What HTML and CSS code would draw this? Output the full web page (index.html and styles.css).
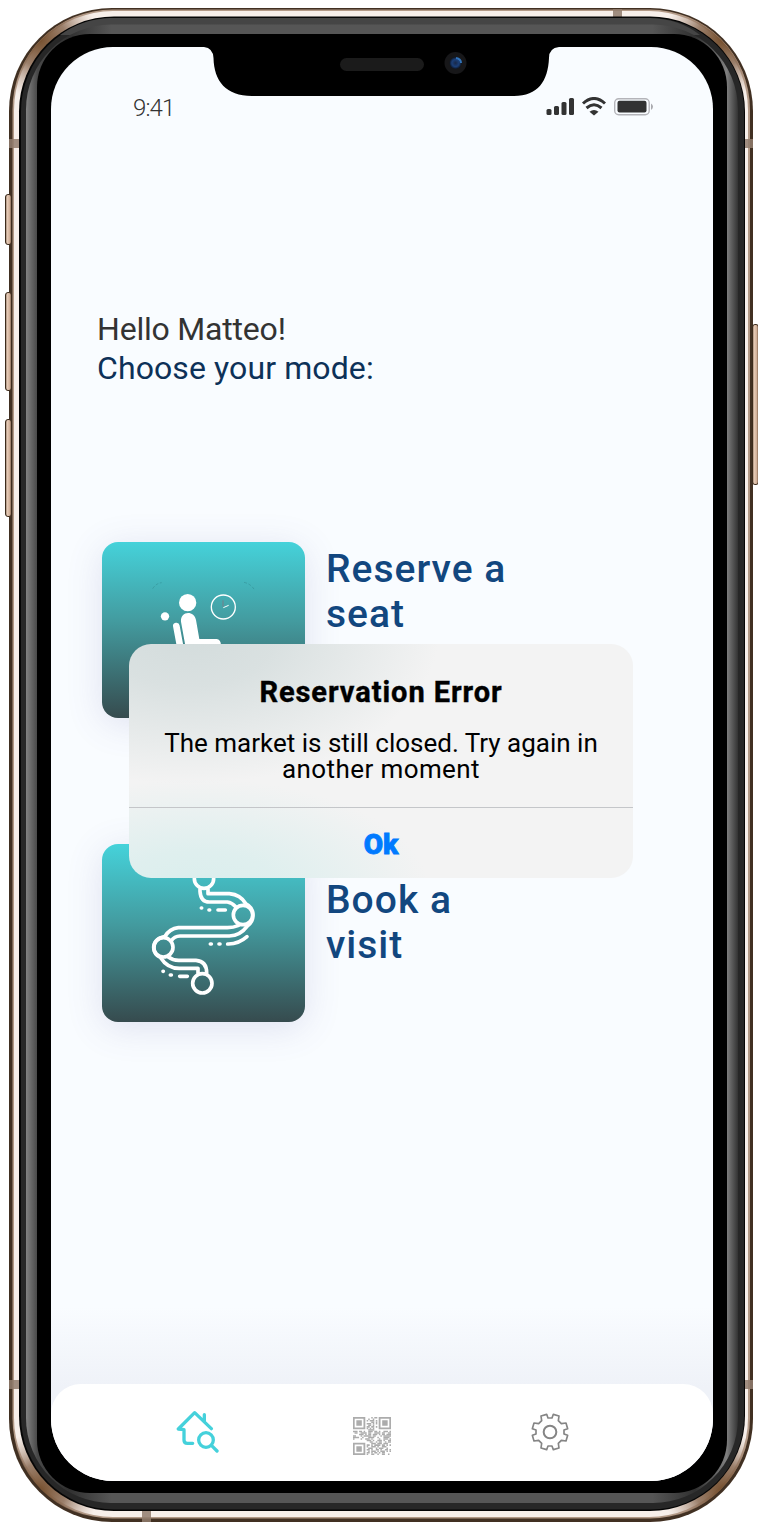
FILE: index.html
```html
<!DOCTYPE html>
<html lang="en">
<head>
<meta charset="utf-8">
<title>Choose your mode</title>
<link rel="stylesheet" href="styles.css">
</head>
<body>
<div class="phone">
  <svg class="frame" viewBox="0 0 758 1530" aria-hidden="true">
    <defs>
      <linearGradient id="key" x1="0" x2="1" y1="0" y2="0"><stop offset="0" stop-color="#86705d"/><stop offset=".3" stop-color="#e6cbb7"/><stop offset=".75" stop-color="#cdab93"/><stop offset="1" stop-color="#4a3524"/></linearGradient>
      <linearGradient id="steel" gradientUnits="userSpaceOnUse" x1="26" x2="738" y1="0" y2="0"><stop offset="0" stop-color="#828282"/><stop offset=".016" stop-color="#484848"/><stop offset=".06" stop-color="#303030"/><stop offset=".12" stop-color="#565656"/><stop offset=".88" stop-color="#565656"/><stop offset=".94" stop-color="#303030"/><stop offset=".984" stop-color="#808080"/><stop offset="1" stop-color="#333"/></linearGradient>
      <radialGradient id="lens"><stop offset="0" stop-color="#182848"/><stop offset=".6" stop-color="#1b3f78"/><stop offset="1" stop-color="#0d1626"/></radialGradient>
      <radialGradient id="bronze"><stop offset="0" stop-color="#76502f"/><stop offset=".45" stop-color="#8b6c55" stop-opacity=".85"/><stop offset="1" stop-color="#b79b88" stop-opacity="0"/></radialGradient>
      <clipPath id="body"><rect x="12" y="10" width="738" height="1509" rx="100"/></clipPath>
    </defs>
    <rect x="9" y="8" width="744" height="1514" rx="103" fill="#413022"/>
    <g stroke="#3c2b1c" stroke-width="1" fill="url(#key)">
      <rect x="5.500" y="194.500" width="6" height="50" rx="2.500"/>
      <rect x="5.500" y="292.500" width="6" height="98" rx="2.500"/>
      <rect x="5.500" y="419.500" width="6" height="97" rx="2.500"/>
      <rect x="752.500" y="324.500" width="6" height="160" rx="2.500"/>
    </g>
    <rect x="12.500" y="9.500" width="737.500" height="1509" rx="100" fill="#b39a87"/>
    <rect x="14" y="11" width="734" height="1506" rx="99" fill="#f7efea"/>
    <g clip-path="url(#body)" fill="url(#bronze)">
      <circle cx="40" cy="40" r="58"/><circle cx="722" cy="40" r="58"/><circle cx="40" cy="1490" r="58"/><circle cx="722" cy="1490" r="58"/>
    </g>
    <g fill="#927d6e" opacity=".85">
      <rect x="9" y="139" width="12" height="9"/><rect x="744" y="139" width="9" height="9"/>
      <rect x="9" y="1380" width="12" height="9"/><rect x="744" y="1380" width="9" height="9"/>
      <rect x="613" y="9" width="9" height="9"/><rect x="142" y="1510" width="9" height="12"/>
    </g>
    <rect x="19" y="16.500" width="726" height="1494.500" rx="95" fill="#050505"/>
    <rect x="21" y="18" width="723" height="1491.500" rx="93" fill="#272727"/>
    <path d="M110 18H650Q680 19 700 35L60 35Q82 19 110 18Z" fill="#454545"/>
    <rect x="26" y="24.500" width="712" height="1478.500" rx="85" fill="url(#steel)"/>
    <rect x="37" y="34" width="690" height="1459" rx="53" fill="#000"/>
  </svg>

  <main class="screen">
    <svg class="notch" viewBox="0 0 356 49" aria-hidden="true">
      <path d="M0 0Q9 1 9.500 11C10 34 22 49 48 49H310C334 49 344 34 345 11Q345 1 355 0Z"/>
      <rect x="136" y="11" width="84" height="13" rx="6.500" fill="#1b1b1b"/>
      <circle cx="251.500" cy="16" r="11" fill="#171719"/><circle cx="251.500" cy="16" r="6" fill="url(#lens)"/><path d="M252 11q5 1 5 5" fill="none" stroke="#3273b8" stroke-width="2"/>
    </svg>

    <header class="status">
      <span class="clock">9:41</span>
      <svg class="signals" viewBox="0 0 108 20" aria-hidden="true">
        <g fill="#333"><rect x=".5" y="12" width="5" height="6" rx="1.500"/><rect x="8" y="9" width="5" height="9" rx="1.500"/><rect x="15.500" y="5" width="5" height="13" rx="1.500"/><rect x="23" y="1" width="5" height="17" rx="1.500"/><path d="M43.500 14.800Q48 11 52.500 14.800L48 18.500Z"/></g>
        <g fill="none" stroke="#333" stroke-width="3"><path d="M37 6.500Q48-3.500 59 6.500M40.500 11Q48 4.500 55.500 11"/></g>
        <rect x="68.700" y="1.700" width="34.500" height="16" rx="4" fill="none" stroke="#b4b4b9" stroke-width="1.400"/>
        <rect x="71.500" y="3.800" width="29" height="11.700" rx="2" fill="#333"/><path d="M105 6.500q4 3 0 6.500Z" fill="#aaaaaf"/>
      </svg>
    </header>

    <section class="greeting">
      <p class="hello">Hello Matteo!</p>
      <h1 class="prompt">Choose your mode:</h1>
    </section>

    <section class="modes">
      <article class="mode">
        <svg class="tile" viewBox="36 36 609 528" preserveAspectRatio="none" role="img" aria-label="Seat">
          <g fill="#fff"><circle cx="293" cy="218" r="26"/><circle cx="225" cy="259" r="12.500"/><path d="M273 275C270 242 313 240 318 270L328 327H380Q392 329 393 345V380H292Z"/></g>
          <path d="M259 288L278 390" stroke="#fff" stroke-width="20" stroke-linecap="round"/>
          <circle cx="400" cy="231" r="36" fill="none" stroke="#fff" stroke-width="4"/>
          <path d="M400 233L416 226" stroke="#fff" stroke-width="3"/><path d="M399 230V211" stroke="#777f88" stroke-width="3"/>
          <path d="M188 176Q198 160 215 158M462 157Q484 162 494 181" fill="none" stroke="#31898f" stroke-width="1.500" stroke-dasharray="9 5"/>
        </svg>
        <h2 class="label">Reserve a<br>seat</h2>
      </article>
      <article class="mode tall">
        <svg class="tile" viewBox="36 42 609 534" preserveAspectRatio="none" role="img" aria-label="Route">
          <g fill="none" stroke="#fff" stroke-width="11" stroke-linecap="round" stroke-linejoin="round">
            <circle cx="342" cy="146" r="29"/><circle cx="459" cy="255" r="29"/><circle cx="220" cy="352" r="29"/><circle cx="337" cy="460" r="29"/>
            <path d="M354 178V191H418Q452 194 468 222Q489 232 489 255Q489 276 473 287Q450 318 418 318H270Q253 319 244 332"/>
            <path d="M330 178V184Q332 216 358 216H412Q426 218 437 230"/>
            <path d="M446 286Q430 293 412 293H265Q239 296 224 320Q192 326 192 354Q192 374 212 383Q232 415 268 415H324V428"/>
            <path d="M235 381Q248 391 266 391H318Q350 393 350 429"/>
            <path d="M334 234H335M357 240H359M384 240H406M361 342H364M387 342H390M413 342Q445 343 471 320M219 424H220M241 435H244M269 439H292"/>
          </g>
        </svg>
        <h2 class="label">Book a<br>visit</h2>
      </article>
    </section>

    <nav class="tabs">
      <svg class="tab home" viewBox="48 60 129 129" aria-label="Home search"><g fill="none" stroke="#45d1db" stroke-width="10" stroke-linecap="round" stroke-linejoin="round"><path d="M154 116L104 68L55 117L72 119V150Q72 160 82 160H98M133 74V94"/><circle cx="138" cy="150" r="22"/><path d="M155 167L171 183"/></g></svg>
      <svg class="tab code" viewBox="0 0 25 25" aria-label="QR code"><g fill="none" stroke="#acacac">
        <path d="M.5.5H7.500V7.500H.5ZM17.500.5H24.500V7.500H17.500ZM.5 17.500H7.500V24.500H.5Z" stroke-width="1.200"/><path d="M4 2.200V5.800M21 2.200V5.800M4 19.200V22.800" stroke-width="3.600"/>
        <path d="M12 .5H16" stroke-dasharray="1 1 2"/><path d="M10 1.500H16" stroke-dasharray="1 2"/><path d="M9 2.500H16" stroke-dasharray="1 1 3 1"/><path d="M12 3.500H16" stroke-dasharray="2 1"/><path d="M9 4.500H16" stroke-dasharray="3 1 1 1"/><path d="M10 5.500H14M9 6.500H16" stroke-dasharray="2 1"/><path d="M9 7.500H15" stroke-dasharray="1 1"/><path d="M10 8.500H14"/>
        <path d="M0 9.500H25" stroke-dasharray="3 1 2 1 1 2"/><path d="M1 10.500H25" stroke-dasharray="2 2 4 1"/><path d="M4 11.500H25" stroke-dasharray="3 1 1 1 2 1"/><path d="M0 12.500H25" stroke-dasharray="2 3 1 1 5 1"/><path d="M0 13.500H25" stroke-dasharray="4 2 1 3"/><path d="M0 14.500H25" stroke-dasharray="1 4 1 2 3 1"/><path d="M9 15.500H25" stroke-dasharray="3 1 1 2"/>
        <path d="M11 16.500H25" stroke-dasharray="2 2 1 1"/><path d="M12 17.500H23" stroke-dasharray="3 1"/><path d="M9 18.500H25" stroke-dasharray="2 1 1 1 4 1"/><path d="M9 19.500H23" stroke-dasharray="1 2 3 1"/><path d="M10 20.500H24" stroke-dasharray="3 2 1 1"/><path d="M9 21.500H25" stroke-dasharray="2 1 1 2"/><path d="M10 22.500H25" stroke-dasharray="1 1 3 1"/><path d="M9 23.500H22" stroke-dasharray="2 1 1 1"/><path d="M9 24.500H25" stroke-dasharray="1 2 2 2"/>
      </g></svg>
      <svg class="tab gear" viewBox="-57 -57 114 114" aria-label="Settings"><g fill="none" stroke="#858585" stroke-width="5" stroke-linejoin="round"><path d="M-6-42H6L10-53L27-48L25-34L34-25L48-27L53-10L42-6V6L53 10L48 27L34 25L25 34L27 48L10 53L6 42H-6L-10 53L-27 48L-25 34L-34 25L-48 27L-53 10L-42 6V-6L-53-10L-48-27L-34-25L-25-34L-27-48L-10-53Z"/><circle r="19" stroke-width="6"/></g></svg>
    </nav>

    <div class="alert" role="alertdialog" aria-labelledby="alert-title">
      <div class="alert-body">
        <h3 class="alert-title" id="alert-title">Reservation Error</h3>
        <p class="alert-text">The market is still closed. Try again in<br><span class="last-line">another moment</span></p>
      </div>
      <button class="alert-action">Ok</button>
    </div>
  </main>
</div>
</body>
</html>
```
FILE: styles.css
```css
* { box-sizing: border-box; }
body { margin: 0; background: #fff; }
h1, h2, h3, p { margin: 0; font-weight: 400; }

.phone {
  position: relative;
  width: 758px;
  height: 1530px;
  padding: 47px 45px 49px 51px;
  overflow: hidden;
  font-family: Roboto, sans-serif;
}
.frame { position: absolute; inset: 0; width: 758px; height: 1530px; }

.screen {
  position: relative;
  display: flex;
  flex-direction: column;
  width: 662px;
  height: 1434px;
  overflow: hidden;
  border-radius: 62px;
  background: linear-gradient(#f9fcff 0, #f9fcff 1260px, #eff2f8 1340px);
}
.notch { position: absolute; top: 0; left: 153px; width: 356px; height: 49px; }

.status {
  display: flex;
  justify-content: space-between;
  height: 88px;
  padding: 45px 59px 0 82px;
}
.clock { font-size: 24px; font-weight: 300; line-height: 33px; color: #333; letter-spacing: -.9px; }
.signals { width: 108px; height: 20px; margin-top: 5px; }

.greeting { margin-top: 175px; padding-left: 46px; font-size: 32px; line-height: 39px; }
.hello { color: #333; letter-spacing: -.2px; }
.prompt { color: #0d3158; font-size: 32px; letter-spacing: .1px; }

.modes { display: flex; flex-direction: column; gap: 126px; margin-top: 154px; padding-left: 51px; }
.mode { display: flex; gap: 21px; height: 176px; }
.mode.tall { height: 178px; }
.tile {
  flex: none;
  width: 203px;
  height: 100%;
  border-radius: 16px;
  background: linear-gradient(#45d2da, #439b9f 45%, #364b4e);
  box-shadow: 0 6px 36px rgba(85, 85, 160, .16);
}
.label { padding-top: 5px; color: #12477f; font-size: 39px; font-weight: 500; line-height: 45px; letter-spacing: 1px; }
.tall .label { padding-top: 34px; }

.tabs {
  display: flex;
  align-items: flex-start;
  height: 97px;
  margin-top: auto;
  padding: 26px 0 0 125px;
  border-radius: 30px 30px 0 0;
  background: #fff;
}
.home { width: 43px; height: 43px; }
.code { width: 38px; height: 38px; margin: 7px 0 0 134px; }
.gear { width: 38px; height: 38px; margin: 3px 0 0 140px; }

.alert {
  position: absolute;
  top: 597px;
  left: 78px;
  display: flex;
  flex-direction: column;
  width: 504px;
  height: 234px;
  border-radius: 22px;
  overflow: hidden;
  color: #000;
  text-align: center;
  background:
    radial-gradient(ellipse 250px 150px at 60px -10px, #d3dcdc, rgba(211, 220, 220, .8) 35%, rgba(243, 243, 243, 0)),
    radial-gradient(ellipse 230px 110px at 70px 245px, #daeeed, rgba(218, 238, 237, .8) 35%, rgba(243, 243, 243, 0)),
    #f3f3f3;
}
.alert-body { height: 163px; padding-top: 31px; }
.alert-title { font-size: 29px; font-weight: 700; line-height: 34px; letter-spacing: .95px; -webkit-text-stroke: .4px #000; }
.alert-text { padding-top: 21px; font-size: 26px; line-height: 26px; }
.last-line { letter-spacing: .4px; }
.alert-action {
  flex: 1;
  padding: 3px 0 0;
  border: 0;
  border-top: 1px solid #c4c6c9;
  background: none;
  color: #007aff;
  font-family: Roboto, sans-serif;
  font-size: 28px;
  font-weight: 900;
  -webkit-text-stroke: .8px #007aff;
}
```
